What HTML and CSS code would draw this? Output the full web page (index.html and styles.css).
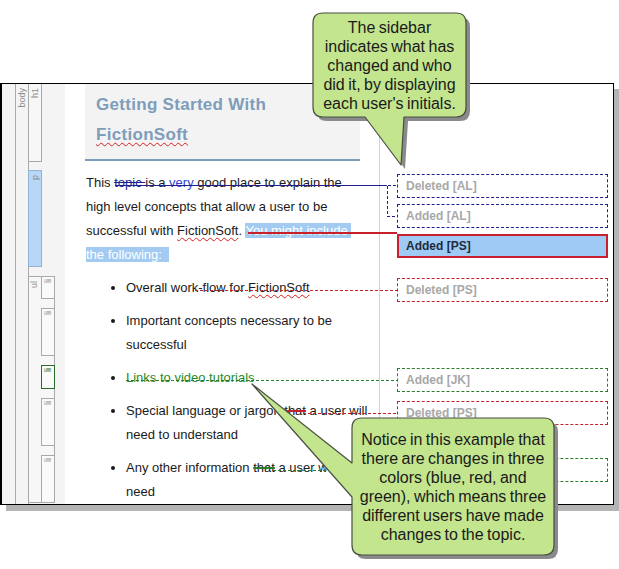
FILE: index.html
```html
<!DOCTYPE html>
<html lang="en">
<head>
<meta charset="utf-8">
<title>Track changes sidebar</title>
<link rel="stylesheet" href="styles.css">
</head>
<body>
<div class="stage">
  <div class="frame">
    <aside class="tree">
      <div class="node node-body"><span class="tag">body</span></div>
      <div class="tree-col">
        <div class="node node-h1"><span class="tag">h1</span></div>
        <div class="node node-p"><span class="tag">p</span></div>
        <div class="node node-ul">
          <span class="tag">ul</span>
          <div class="li-col">
            <div class="node node-li li-1"><span class="tag">li</span></div>
            <div class="node node-li li-2"><span class="tag">li</span></div>
            <div class="node node-li li-1 li-green"><span class="tag">li</span></div>
            <div class="node node-li li-2"><span class="tag">li</span></div>
            <div class="node node-li li-2"><span class="tag">li</span></div>
          </div>
        </div>
      </div>
    </aside>

    <main class="doc">
      <h1 class="title">Getting Started With<br><span class="spell">FictionSoft</span></h1>
      <p class="para">This <del class="del-navy">topic </del>is a <ins class="ins-blue">very</ins> good place to explain the<br>high level concepts that allow a user to be<br>successful with <span class="spell">FictionSoft</span>. <span class="sel">You might include&nbsp;</span><br><span class="sel">the following:&nbsp;&nbsp;</span></p>
      <ul class="list">
        <li>Overall work-flow for <span class="spell">FictionSoft</span></li>
        <li>Important concepts necessary to be<br>successful</li>
        <li><span class="ins-green">Links to video tutorials</span></li>
        <li>Special language or jargon <del class="del-red">that</del> a user will<br>need to understand</li>
        <li>Any other information <del class="del-green">that</del> a user would<br>need</li>
      </ul>
    </main>

    <section class="changes">
      <div class="chg chg-navy">Deleted [AL]</div>
      <div class="chg chg-navy gap-6">Added [AL]</div>
      <div class="chg chg-active gap-6">Added [PS]</div>
      <div class="chg chg-red gap-20">Deleted [PS]</div>
      <div class="chg chg-green gap-66">Added [JK]</div>
      <div class="chg chg-red gap-9">Deleted [PS]</div>
      <div class="chg chg-green gap-33"></div>
    </section>
  </div>

  <svg class="links" width="619" height="569" viewBox="0 0 619 569">
    <g fill="none" shape-rendering="crispEdges">
      <line x1="115" y1="185.5" x2="387" y2="185.5" stroke="#1f1f8f" stroke-width="1"/>
      <path d="M387.5 185.5 H397 M387.5 185.5 V216.5 H397" stroke="#1f1f8f" stroke-width="1" stroke-dasharray="3 2"/>
      <line x1="248" y1="233" x2="397" y2="233" stroke="#c8202a" stroke-width="2"/>
      <line x1="195" y1="290.5" x2="397" y2="290.5" stroke="#c8202a" stroke-width="1" stroke-dasharray="3 2"/>
      <line x1="126" y1="380.5" x2="397" y2="380.5" stroke="#2a7d2a" stroke-width="1" stroke-dasharray="3 2"/>
      <line x1="303" y1="413.5" x2="397" y2="413.5" stroke="#c8202a" stroke-width="1" stroke-dasharray="3 2"/>
      <line x1="273" y1="470.5" x2="397" y2="470.5" stroke="#2a7d2a" stroke-width="1" stroke-dasharray="3 2"/>
    </g>
  </svg>

  <div class="callout callout-top">
    <svg class="bubble" width="153" height="104" viewBox="0 0 153 104">
      <path class="bubble-shadow" transform="translate(4 4)" d="M10,0 H143 Q153,0 153,10 V94 Q153,104 143,104 H91 L88,152 L52,104 H10 Q0,104 0,94 V10 Q0,0 10,0 Z"/>
      <path class="bubble-fill" d="M10,0 H143 Q153,0 153,10 V94 Q153,104 143,104 H91 L88,152 L52,104 H10 Q0,104 0,94 V10 Q0,0 10,0 Z"/>
    </svg>
    <p class="callout-text">The sidebar<br>indicates what has<br>changed and who<br>did it, by displaying<br>each user's initials.</p>
  </div>

  <div class="callout callout-bottom">
    <svg class="bubble" width="202" height="137" viewBox="0 0 202 137">
      <path class="bubble-shadow" transform="translate(4 4)" d="M10,0 H192 Q202,0 202,10 V127 Q202,137 192,137 H10 Q0,137 0,127 V79 L-100,-34 L0,45 V10 Q0,0 10,0 Z"/>
      <path class="bubble-fill" d="M10,0 H192 Q202,0 202,10 V127 Q202,137 192,137 H10 Q0,137 0,127 V79 L-100,-34 L0,45 V10 Q0,0 10,0 Z"/>
    </svg>
    <p class="callout-text">Notice in this example that<br>there are changes in three<br>colors (blue, red, and<br>green), which means three<br>different users have made<br>changes to the topic.</p>
  </div>
</div>
</body>
</html>
```

FILE: styles.css
```css
* { box-sizing: border-box; }

html, body {
  margin: 0;
  padding: 0;
  background: #fff;
}

body {
  font-family: "Liberation Sans", Arial, sans-serif;
  color: #1a1a1a;
}

.stage {
  position: relative;
  width: 619px;
  height: 569px;
  padding-top: 83px;
  overflow: hidden;
}

/* ---------- editor frame ---------- */
.frame {
  width: 614px;
  height: 422px;
  border: 1px solid #000;
  border-left-width: 2px;
  display: flex;
  background: #fff;
  box-shadow: 6px 6px 0 #b4b4b4;
}

/* ---------- structure tree ---------- */
.tree {
  width: 63px;
  flex: none;
  display: flex;
  padding-left: 13px;
  background: #f4f4f4;
}

.node {
  border: 1px solid #a9a9a9;
  display: flex;
  flex-direction: column;
  align-items: center;
}

.node-body {
  width: 14px;
  border-top: none;
  border-bottom: none;
}

.tree-col {
  width: 27px;
  margin-left: -1px;
  display: flex;
  flex-direction: column;
}

.node-h1 {
  width: 14px;
  height: 78px;
  border-top: none;
  background: #f7f7f7;
}

.node-p {
  width: 14px;
  height: 97px;
  margin-top: 8px;
  background: #b8d7f6;
  border-color: #93b3d6;
}

.node-ul {
  width: 27px;
  height: 227px;
  margin-top: 9px;
  flex-direction: row;
  align-items: flex-start;
  background: #f7f7f7;
}

.node-ul > .tag {
  width: 12px;
  text-align: center;
}

.li-col {
  width: 14px;
  margin: -1px -1px -1px auto;
  display: flex;
  flex-direction: column;
  gap: 9px;
}

.node-li { width: 14px; background: #fafafa; }
.li-1 { height: 23px; }
.li-1.li-green { height: 24px; border-color: #2b6b2b; }
.li-2 { height: 48px; }
.li-green .tag { color: #2b6b2b; }

.tag {
  writing-mode: vertical-rl;
  transform: rotate(180deg);
  font-size: 9px;
  line-height: 10px;
  color: #8c8c8c;
  padding: 4px 0;
}

.node-li .tag { padding: 2px 0; }

/* ---------- document ---------- */
.doc {
  width: 315px;
  flex: none;
  border-right: 1px solid #d2d2d2;
  overflow: hidden;
  font-size: 13px;
  line-height: 24px;
}

.title {
  margin: 0 0 0 20px;
  width: 275px;
  padding: 6px 11px 9px;
  background: #f3f3f3;
  border-bottom: 2px solid #7d9cb8;
  font-size: 17px;
  line-height: 30px;
  font-weight: bold;
  letter-spacing: 0.3px;
  color: #7e9dba;
}

.spell {
  text-decoration: underline wavy #d42020;
  text-decoration-thickness: 1px;
  text-underline-offset: 2px;
  text-decoration-skip-ink: none;
}

.para {
  margin: 10px 0 0 21px;
}

del, ins { text-decoration: none; }

.del-navy {
  color: #1f1f8f;
  text-decoration: line-through #1f1f8f;
}

.ins-blue { color: #2f3fd0; }

.sel {
  background: #a3cbf1;
  color: #fff;
}

.list {
  margin: 9px 0 0 21px;
  padding-left: 40px;
}

.list li { margin-bottom: 9px; }

.ins-green { color: #2a8a2a; }

.del-red {
  text-decoration: line-through #c8202a;
  text-decoration-thickness: 2px;
}

.del-green {
  text-decoration: line-through #2a7d2a;
  text-decoration-thickness: 2px;
}

/* ---------- change margin ---------- */
.changes {
  flex: 1;
  padding: 90px 0 0 17px;
  display: flex;
  flex-direction: column;
}

.chg {
  width: 211px;
  height: 24px;
  flex: none;
  padding-left: 8px;
  display: flex;
  align-items: center;
  font-size: 12px;
  font-weight: bold;
  color: #a8a8a8;
  border: 1px dashed;
}

.chg-navy { border-color: #1f1f8f; }
.chg-red { border-color: #c8202a; }
.chg-green { border-color: #2a7d2a; }

.chg-active {
  border: 2px solid #c8202e;
  background: #9ecaf5;
  color: #1e2c3c;
  padding-left: 7px;
}

.gap-6 { margin-top: 6px; }
.gap-9 { margin-top: 9px; }
.gap-20 { margin-top: 20px; }
.gap-33 { margin-top: 33px; }
.gap-66 { margin-top: 66px; }

/* ---------- connector overlay ---------- */
.links {
  position: absolute;
  left: 0;
  top: 0;
  pointer-events: none;
}

/* ---------- callouts ---------- */
.callout {
  position: absolute;
}

.callout-top { left: 313px; top: 13px; width: 153px; height: 104px; }
.callout-bottom { left: 352px; top: 418px; width: 202px; height: 137px; }

.bubble {
  position: absolute;
  left: 0;
  top: 0;
  overflow: visible;
}

.bubble-shadow { fill: #8a8a8a; }

.bubble-fill {
  fill: #c3e58e;
  stroke: #4a4f44;
  stroke-width: 1.2;
  stroke-linejoin: round;
}

.callout-text {
  position: relative;
  margin: 0;
  height: 100%;
  display: flex;
  align-items: center;
  justify-content: center;
  text-align: center;
  font-size: 16px;
  line-height: 19px;
  word-spacing: -1px;
  color: #1a1a1a;
}
```
